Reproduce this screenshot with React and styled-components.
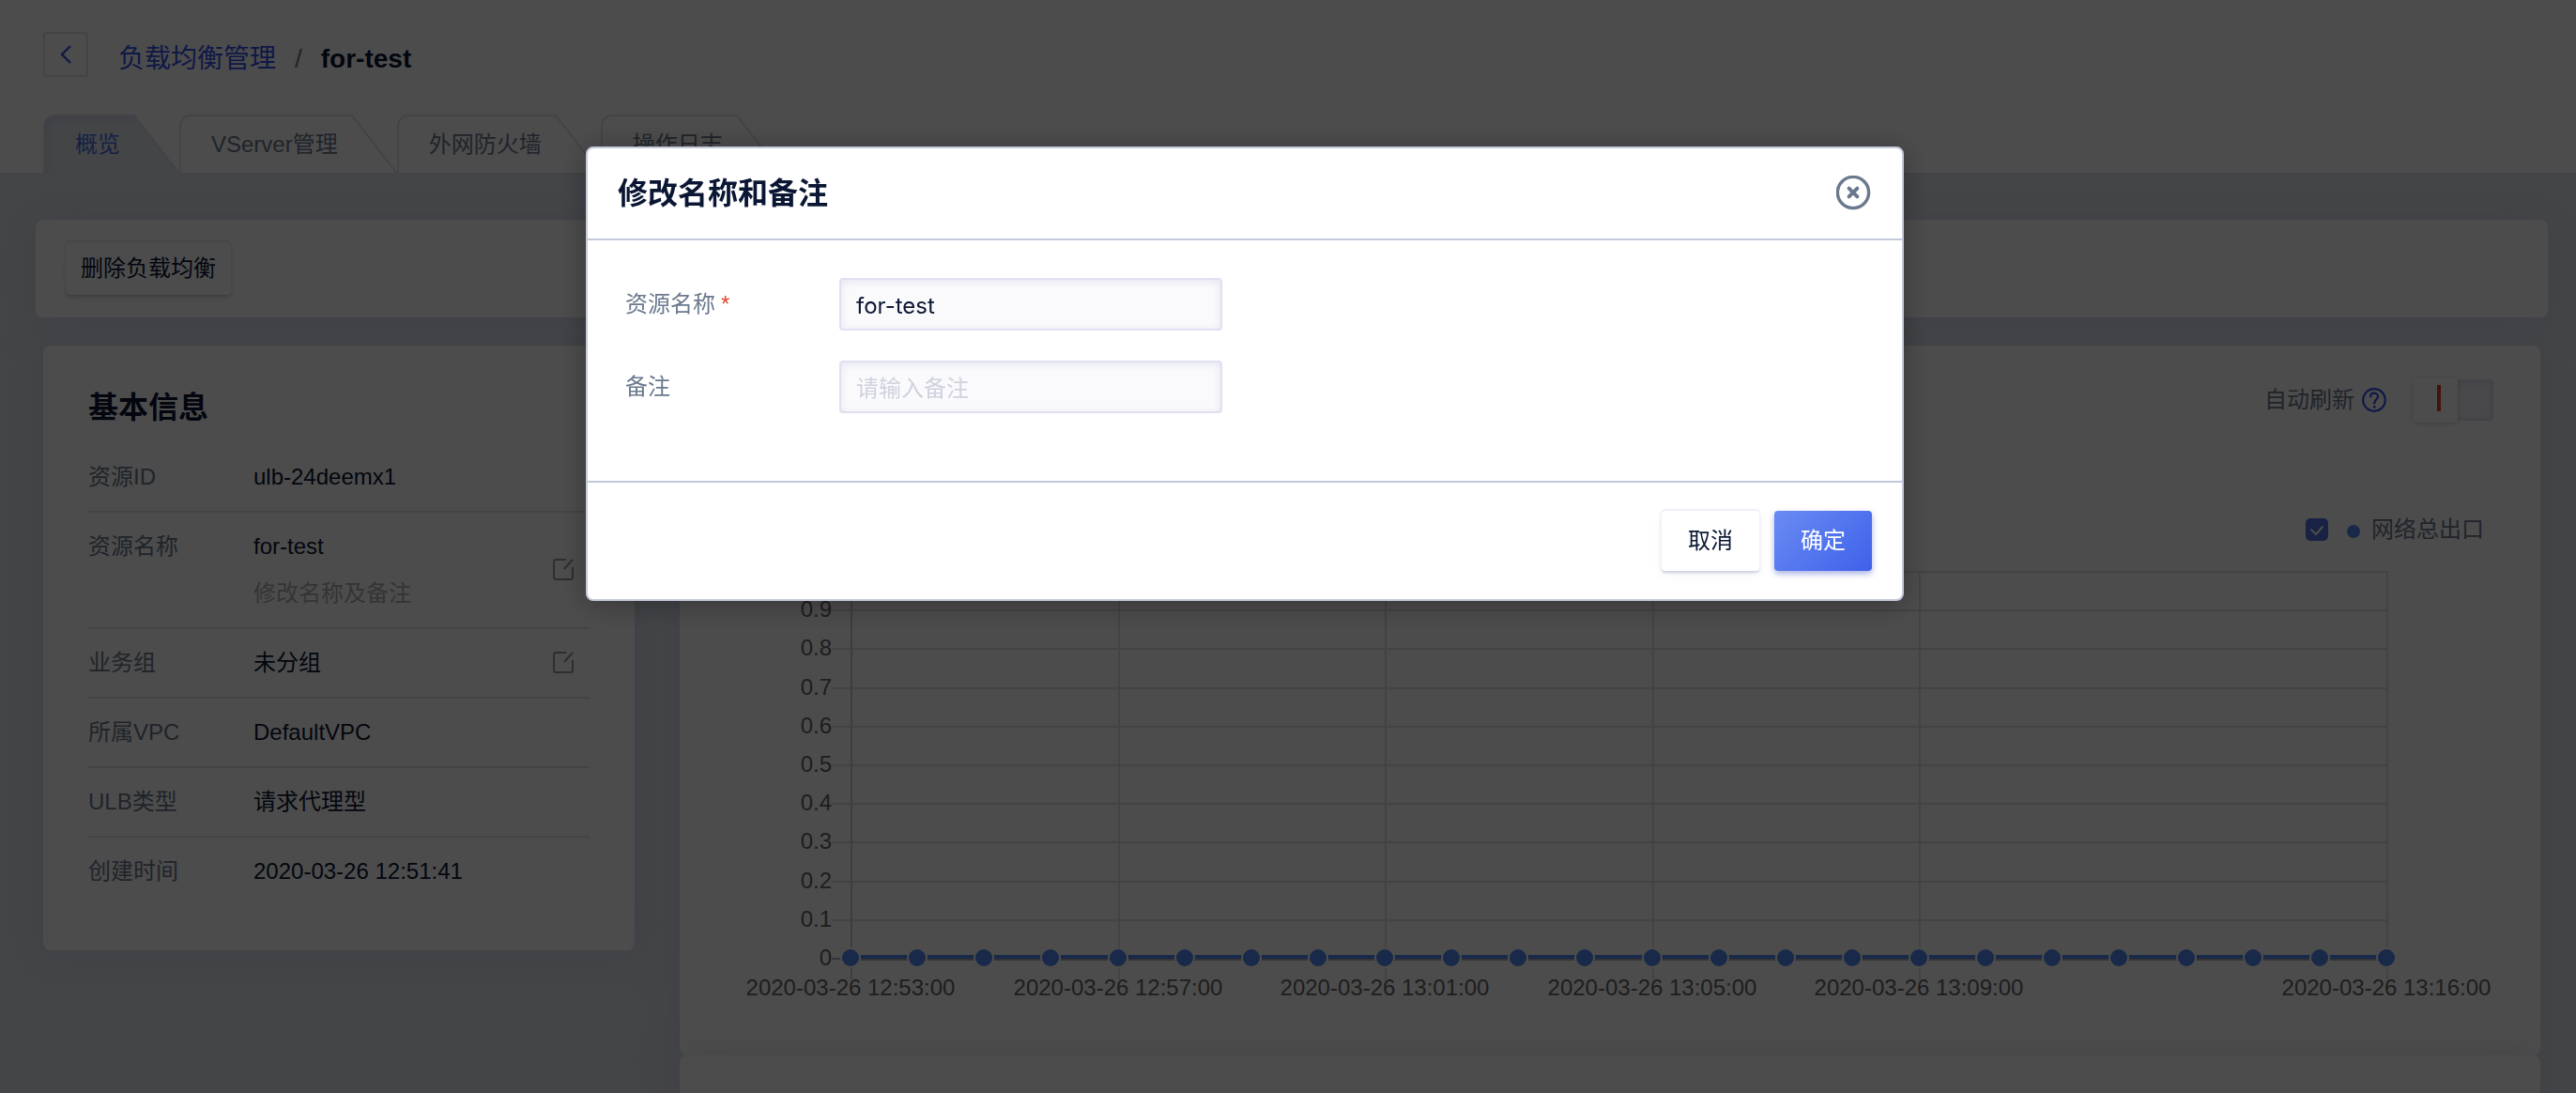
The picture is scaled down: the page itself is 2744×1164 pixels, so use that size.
import React, { useLayoutEffect, useRef, useState } from "react";
import styled, { createGlobalStyle, css } from "styled-components";

const color = {
  ink: "#0a1633",
  label: "#6b798e",
  link: "#3452ea",
  line: "#dfe0f0",
  hairline: "#e4e4e8",
  page: "#e3e7ee",
  frame: "#c3c9da",
  series: "#508af5",
};

const GlobalStyle = createGlobalStyle`
  *, *::before, *::after { box-sizing: border-box; }
  body {
    margin: 0;
    overflow: hidden;
    font-family: "Liberation Sans", "Noto Sans CJK SC", sans-serif;
    font-size: 24px;
    line-height: 32px;
    color: ${color.ink};
    background: ${color.page};
  }
  button, input { font: inherit; color: inherit; }
  h1, h2, dl, dd, p { margin: 0; }
`;

const Page = styled.div`
  height: 100vh;
  overflow: hidden;
`;

/* ---------- header ---------- */

const Header = styled.header`
  padding: 34px 46px 0;
  background: #fff;
  border-bottom: 2px solid ${color.line};
`;

const TitleBar = styled.div`
  display: flex;
  align-items: center;
  gap: 32px;
  height: 48px;
`;

const BackButton = styled.button`
  display: grid;
  place-items: center;
  width: 48px;
  height: 48px;
  padding: 0;
  background: #fff;
  border: 2px solid ${color.line};
  border-radius: 4px;
`;

const Breadcrumb = styled.nav`
  display: flex;
  align-items: center;
  gap: 20px;
  padding-top: 10px;
  font-size: 28px;
  color: ${color.label};

  a {
    color: ${color.link};
    text-decoration: none;
  }
  strong {
    color: ${color.ink};
  }
`;

const Tabs = styled.div`
  display: flex;
  margin: 40px 0 -2px;
`;

const Tab = styled.button`
  display: flex;
  height: 64px;
  padding: 0;
  border: 0;
  background: none;
  color: ${(p) => (p.$active ? "#4a6ee8" : color.label)};
`;

const TabLabel = styled.span`
  height: 64px;
  padding: 14px 15px 0 32px;
  border: solid ${color.line};
  border-width: 2px 0 0 2px;
  border-top-left-radius: 12px;
  ${(p) =>
    p.$active
      ? css`
          background: ${color.page};
          box-shadow: inset 4px 6px 6px -2px #d5d9ec;
        `
      : css`
          border-bottom: 2px solid ${color.line};
        `}
`;

/* ---------- cards ---------- */

const Content = styled.main`
  padding: 48px 30px 0 38px;
`;

const Card = styled.section`
  background: #fff;
  border-radius: 8px;
  box-shadow: 0 4px 40px rgba(196, 202, 226, 0.5);
`;

const Toolbar = styled(Card)`
  display: flex;
  align-items: center;
  height: 104px;
  padding: 0 32px;
`;

const Button = styled.button`
  height: ${(p) => (p.$small ? 56 : 64)}px;
  padding: 0 ${(p) => (p.$small ? 16 : 28)}px;
  border: 0;
  border-radius: 4px;
  background: #fff;
  box-shadow: 0 -1px 0 1px #efeff8, 0 2px 3px rgba(65, 80, 130, 0.25),
    0 4px 12px rgba(65, 80, 130, 0.06);
  ${(p) =>
    p.$primary &&
    css`
      color: #fff;
      background: linear-gradient(135deg, #6a8bf3 0%, #3e61ea 100%);
      box-shadow: 0 3px 6px rgba(62, 80, 190, 0.45);
    `}
`;

const Columns = styled.div`
  display: grid;
  grid-template-columns: 630px minmax(0, 1fr);
  align-items: start;
  gap: 48px;
  margin: 30px 8px 0;
`;

const InfoCard = styled(Card)`
  padding: 50px 48px 48px;
`;

const CardTitle = styled.h2`
  margin-bottom: 22px;
  font-size: 32px;
  line-height: 32px;
`;

const InfoRow = styled.div`
  display: flex;
  align-items: center;
  padding: 20px 16px 20px 0;

  & + & {
    border-top: 2px solid ${color.hairline};
  }
  dt {
    align-self: flex-start;
    width: 176px;
    color: ${color.label};
  }
  dd {
    flex: 1;
  }
`;

const Remark = styled.p`
  margin-top: 18px;
  color: #b0b0b0;
`;

const IconButton = styled.button`
  display: grid;
  padding: 0;
  border: 0;
  background: none;
`;

const MonitorCard = styled(Card)`
  display: flex;
  flex-direction: column;
  height: 756px;
  padding: 34px 48px 48px;
`;

const RefreshBar = styled.div`
  display: flex;
  justify-content: flex-end;
  align-items: center;
  gap: 8px;
  height: 48px;
  color: ${color.label};
`;

const Switch = styled.input`
  appearance: none;
  width: 86px;
  height: 44px;
  margin: 0 2px 0 20px;
  border: 2px solid ${color.line};
  border-radius: 4px;
  background: #f4f4fa;
  box-shadow: inset 0 2px 8px #dcdcec;

  &::before {
    content: "";
    display: block;
    width: 48px;
    height: 48px;
    margin: -4px 0 0 -2px;
    border-radius: 4px;
    background: linear-gradient(#e0452f, #e0452f) 26px 8px / 4px 28px no-repeat #fff;
    box-shadow: 0 1px 4px rgba(40, 50, 90, 0.25);
  }
`;

const Legend = styled.div`
  display: flex;
  justify-content: flex-end;
  align-items: center;
  gap: 20px;
  margin: 98px 12px 0 0;
  color: ${color.label};

  label {
    display: flex;
    align-items: center;
    gap: 12px;
  }
`;

const Tick = styled.span`
  display: grid;

  & > * {
    grid-area: 1 / 1;
  }
  input {
    appearance: none;
    width: 24px;
    height: 24px;
    margin: 0;
    border-radius: 5px;
    background: #5573e4;
  }
  svg {
    pointer-events: none;
  }
`;

const Dot = styled.i`
  width: 14px;
  height: 14px;
  margin-top: 4px;
  border-radius: 50%;
  background: ${color.series};
`;

const ChartBox = styled.div`
  height: 480px;
  margin-top: 8px;

  svg {
    display: block;
    overflow: visible;
  }
`;

const NextCard = styled(Card)`
  height: 300px;
`;

/* ---------- dialog ---------- */

const Overlay = styled.div`
  position: fixed;
  inset: 0;
  display: flex;
  justify-content: center;
  align-items: flex-start;
  padding: 156px 92px 0 0;
  background: rgba(0, 0, 0, 0.7);
`;

const Dialog = styled.form`
  width: 1404px;
  max-width: 100%;
  background: #fff;
  border: 2px solid ${color.frame};
  border-radius: 8px;
  box-shadow: 0 4px 32px rgba(0, 0, 0, 0.3);
`;

const DialogHeader = styled.div`
  display: flex;
  justify-content: space-between;
  align-items: center;
  height: 98px;
  padding: 0 32px;
  border-bottom: 2px solid ${color.frame};

  h1 {
    font-size: 32px;
    line-height: 40px;
  }
`;

const DialogBody = styled.div`
  display: grid;
  gap: 32px;
  padding: 40px 40px 72px;
`;

const Field = styled.div`
  display: grid;
  grid-template-columns: 228px 408px;
  align-items: center;

  label {
    color: ${color.label};
  }
  em {
    margin-left: 6px;
    font-style: normal;
    color: #e0452f;
  }
  input {
    height: 56px;
    padding: 2px 16px 0;
    border: 2px solid ${color.line};
    border-radius: 4px;
    outline: 0;
    font-family: Inter, "Noto Sans CJK SC", sans-serif;
    background: #fafafc;
    box-shadow: inset 0 2px 8px #e4e4f0;
  }
  input::placeholder {
    color: #cfd2de;
  }
`;

const DialogFooter = styled.div`
  display: flex;
  justify-content: flex-end;
  gap: 16px;
  padding: 30px 32px;
  border-top: 2px solid ${color.frame};
`;

/* ---------- icons ---------- */

const ChevronIcon = () => (
  <svg width="14" height="22" viewBox="0 0 14 22" fill="none" stroke={color.link} strokeWidth="2.4">
    <path d="M12 2 L3 11 L12 20" />
  </svg>
);

const SlopeIcon = ({ active }) => (
  <svg width="48" height="64" viewBox="0 0 48 64" fill="none">
    <path d="M0 0 L48 62 V64 H0 Z" fill={active ? color.page : "none"} />
    {!active && <path d="M0 63 H48" stroke={color.line} strokeWidth="2" />}
    <path d="M0 1 L48 63" stroke={color.line} strokeWidth="2" />
  </svg>
);

const EditIcon = () => (
  <svg width="24" height="24" viewBox="0 0 24 24" fill="none" stroke="#9499a8" strokeWidth="2">
    <path d="M15 1 H4 Q2 1 2 3 V20 Q2 22 4 22 H20 Q22 22 22 20 V9" />
    <path d="M13 11 L22 1" />
  </svg>
);

const HelpIcon = () => (
  <svg width="26" height="26" viewBox="0 0 26 26" fill="none" stroke={color.link} strokeWidth="2.2">
    <circle cx="13" cy="13" r="11.8" />
    <path d="M9 9.4 C9 4.4 17 4.6 17 9.2 C17 12.2 13.2 12.4 13.2 16.6" strokeLinecap="round" />
    <circle cx="13.2" cy="20.4" r="1.4" fill={color.link} stroke="none" />
  </svg>
);

const CheckIcon = () => (
  <svg width="24" height="24" viewBox="0 0 24 24" fill="none" stroke="#fff" strokeWidth="2">
    <path d="M6 12 L11 17 L18 9" strokeLinecap="round" strokeLinejoin="round" />
  </svg>
);

const CloseIcon = () => (
  <svg width="38" height="38" viewBox="0 0 38 38" fill="none" stroke={color.label}>
    <circle cx="18" cy="18" r="16.6" strokeWidth="3.4" />
    <path d="M13.6 13.6 L22.4 22.4 M22.4 13.6 L13.6 22.4" strokeWidth="4" strokeLinecap="round" />
  </svg>
);

/* ---------- chart ---------- */

const points = Array.from({ length: 24 }, (_, i) => {
  const minutes = 53 + i;
  const hour = 12 + Math.floor(minutes / 60);
  return `2020-03-26 ${hour}:${String(minutes % 60).padStart(2, "0")}:00`;
});
const labelled = [0, 4, 8, 12, 16, 23];
const levels = Array.from({ length: 11 }, (_, i) => i);

function TrafficChart() {
  const box = useRef(null);
  const [width, setWidth] = useState(0);

  useLayoutEffect(() => {
    const measure = () => setWidth(box.current.clientWidth);
    measure();
    const observer = new ResizeObserver(measure);
    observer.observe(box.current);
    return () => observer.disconnect();
  }, []);

  const left = 134;
  const right = width - 116;
  const top = 21;
  const bottom = 433;
  const x = (i) => Math.round(left + ((right - left) * i) / (points.length - 1));
  const y = (i) => Math.round(bottom - ((bottom - top) * i) / 10);

  return (
    <ChartBox ref={box}>
      {width > 0 && (
        <svg width={width} height="480" fontSize="24" fill="#666">
          {levels.map((i) => (
            <g key={i}>
              <path
                d={`M${left - 20} ${y(i)} H${i ? right + 1 : left}`}
                stroke={i ? "#e0e0e0" : "#aaa"}
                strokeWidth="2"
              />
              <text x={left - 20} y={y(i) + 7} textAnchor="end">
                {i === 0 ? "0" : i === 10 ? "1" : `0.${i}`}
              </text>
            </g>
          ))}
          {labelled.map((i) => (
            <g key={i}>
              <path
                d={`M${x(i) + 1} ${top - 1} V${bottom + 22}`}
                stroke={i ? "#e0e0e0" : "#ccc"}
                strokeWidth="2"
              />
              <text x={x(i)} y={bottom + 39} textAnchor="middle">
                {points[i]}
              </text>
            </g>
          ))}
          <path d={`M${left} ${bottom + 1} H${right}`} stroke="#aaa" strokeWidth="2" />
          <path d={`M${left} ${bottom - 2} H${right}`} stroke={color.series} strokeWidth="4" />
          {points.map((time, i) => (
            <circle
              key={time}
              cx={x(i)}
              cy={bottom - 1}
              r="10"
              fill={color.series}
              stroke="#fff"
              strokeWidth="2"
            />
          ))}
        </svg>
      )}
    </ChartBox>
  );
}

/* ---------- page ---------- */

const tabs = ["概览", "VServer管理", "外网防火墙", "操作日志"];

const info = [
  { label: "资源ID", value: "ulb-24deemx1" },
  { label: "资源名称", value: "for-test", remark: "修改名称及备注", editable: true },
  { label: "业务组", value: "未分组", editable: true },
  { label: "所属VPC", value: "DefaultVPC" },
  { label: "ULB类型", value: "请求代理型" },
  { label: "创建时间", value: "2020-03-26 12:51:41" },
];

export default function App() {
  return (
    <>
      <GlobalStyle />
      <Page>
        <Header>
          <TitleBar>
            <BackButton type="button" aria-label="返回">
              <ChevronIcon />
            </BackButton>
            <Breadcrumb>
              <a href="#list">负载均衡管理</a>
              <span>/</span>
              <strong>for-test</strong>
            </Breadcrumb>
          </TitleBar>
          <Tabs role="tablist">
            {tabs.map((name, i) => (
              <Tab key={name} type="button" role="tab" aria-selected={i === 0} $active={i === 0}>
                <TabLabel $active={i === 0}>{name}</TabLabel>
                <SlopeIcon active={i === 0} />
              </Tab>
            ))}
          </Tabs>
        </Header>

        <Content>
          <Toolbar>
            <Button type="button" $small>
              删除负载均衡
            </Button>
          </Toolbar>

          <Columns>
            <InfoCard>
              <CardTitle>基本信息</CardTitle>
              <dl>
                {info.map((row) => (
                  <InfoRow key={row.label}>
                    <dt>{row.label}</dt>
                    <dd>
                      {row.value}
                      {row.remark && <Remark>{row.remark}</Remark>}
                    </dd>
                    {row.editable && (
                      <IconButton type="button" aria-label={`编辑${row.label}`}>
                        <EditIcon />
                      </IconButton>
                    )}
                  </InfoRow>
                ))}
              </dl>
            </InfoCard>

            <div>
              <MonitorCard>
                <RefreshBar>
                  <label htmlFor="auto-refresh">自动刷新</label>
                  <HelpIcon />
                  <Switch id="auto-refresh" type="checkbox" role="switch" />
                </RefreshBar>
                <Legend>
                  <Tick>
                    <input id="series-out" type="checkbox" defaultChecked />
                    <CheckIcon />
                  </Tick>
                  <label htmlFor="series-out">
                    <Dot />
                    网络总出口
                  </label>
                </Legend>
                <TrafficChart />
              </MonitorCard>
              <NextCard />
            </div>
          </Columns>
        </Content>
      </Page>

      <Overlay>
        <Dialog role="dialog" aria-modal="true" aria-labelledby="dialog-title">
          <DialogHeader>
            <h1 id="dialog-title">修改名称和备注</h1>
            <IconButton type="button" aria-label="关闭">
              <CloseIcon />
            </IconButton>
          </DialogHeader>
          <DialogBody>
            <Field>
              <label htmlFor="name">
                资源名称<em>*</em>
              </label>
              <input id="name" type="text" defaultValue="for-test" />
            </Field>
            <Field>
              <label htmlFor="remark">备注</label>
              <input id="remark" type="text" placeholder="请输入备注" />
            </Field>
          </DialogBody>
          <DialogFooter>
            <Button type="button">取消</Button>
            <Button type="button" $primary>
              确定
            </Button>
          </DialogFooter>
        </Dialog>
      </Overlay>
    </>
  );
}
